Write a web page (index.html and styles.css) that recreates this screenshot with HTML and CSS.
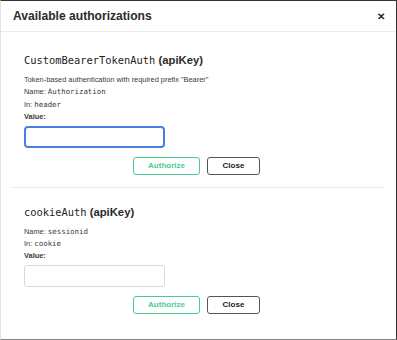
FILE: index.html
```html
<!DOCTYPE html>
<html>
<head>
<meta charset="utf-8">
<link rel="stylesheet" href="styles.css">
</head>
<body>
<div class="modal">
  <div class="modal-header">
    <h3 class="modal-title">Available authorizations</h3>
    <span class="close-x">✕</span>
  </div>
  <div class="modal-content">
    <div class="auth-container">
      <h4 class="auth-title"><code>CustomBearerTokenAuth</code> <span>(apiKey)</span></h4>
      <p class="line">Token-based authentication with required prefix "Bearer"</p>
      <p class="line">Name: <code>Authorization</code></p>
      <p class="line">In: <code>header</code></p>
      <p class="line label">Value:</p>
      <div class="input focused"></div>
      <div class="actions">
        <button class="btn authorize">Authorize</button>
        <button class="btn close">Close</button>
      </div>
    </div>
    <div class="auth-container second">
      <h4 class="auth-title"><code>cookieAuth</code> <span>(apiKey)</span></h4>
      <p class="line">Name: <code>sessionid</code></p>
      <p class="line">In: <code>cookie</code></p>
      <p class="line label">Value:</p>
      <div class="input"></div>
      <div class="actions">
        <button class="btn authorize">Authorize</button>
        <button class="btn close">Close</button>
      </div>
    </div>
  </div>
</div>
</body>
</html>
```

FILE: styles.css
```css
html, body {
  margin: 0;
  padding: 0;
  background: #3b3b3b;
}
body {
  width: 397px;
  height: 340px;
  font-family: "Liberation Sans", Arial, sans-serif;
  color: #333;
}
.modal {
  box-sizing: border-box;
  width: 397px;
  height: 340px;
  background: #fff;
  border-top: 1px solid #333;
  border-right: 1px solid #333;
  border-bottom: 1px solid #888;
  border-left: 1px solid #e2e2e2;
  display: flex;
  flex-direction: column;
}
.modal-header {
  height: 30px;
  border-bottom: 1px solid #ececec;
  display: flex;
  align-items: center;
  justify-content: space-between;
  padding: 0 11px 0 12px;
}
.modal-title {
  margin: 0;
  font-size: 12.1px;
  font-weight: bold;
  color: #2b2b2b;
}
.close-x {
  font-size: 9.5px;
  font-weight: bold;
  color: #222;
}
.modal-content {
  padding: 4px 11px 0 11px;
}
.auth-container {
  padding: 14px 12px 12px 12px;
  border-bottom: 1px solid #ebebeb;
}
.auth-container.second {
  border-bottom: none;
}
.auth-title {
  margin: 0;
  height: 20px;
  line-height: 20px;
  font-size: 11px;
  font-weight: bold;
  color: #2b2b2b;
}
.auth-title code {
  font-family: "DejaVu Sans Mono", monospace;
  font-weight: normal;
  font-size: 10.4px;
  color: #222;
}
.auth-title span {
  font-size: 11.3px;
}
.auth-title + .line {
  margin-top: 4px;
}
.line {
  margin: 0;
  font-size: 7.4px;
  line-height: 12.4px;
  color: #3a3a3a;
}
.line code {
  font-family: "DejaVu Sans Mono", monospace;
  font-size: 7.4px;
}
.label {
  font-weight: bold;
}
.input {
  box-sizing: border-box;
  margin-top: 2px;
  width: 141px;
  height: 22px;
  border: 1px solid #d9d9d9;
  border-radius: 3px;
  background: #fff;
}
.input.focused {
  border: 2px solid #4a7fe0;
  border-radius: 4px;
}
.actions {
  margin-top: 9px;
  display: flex;
  justify-content: center;
  gap: 7px;
  padding-right: 4px;
}
.btn {
  box-sizing: border-box;
  height: 18px;
  padding: 0;
  background: #fff;
  border-radius: 3px;
  font-family: "Liberation Sans", Arial, sans-serif;
  font-size: 8px;
  font-weight: bold;
  cursor: pointer;
}
.btn.authorize {
  width: 67px;
  border: 1px solid #49cc90;
  color: #49cc90;
}
.btn.close {
  width: 53px;
  border: 1px solid #555;
  color: #222;
}
```
